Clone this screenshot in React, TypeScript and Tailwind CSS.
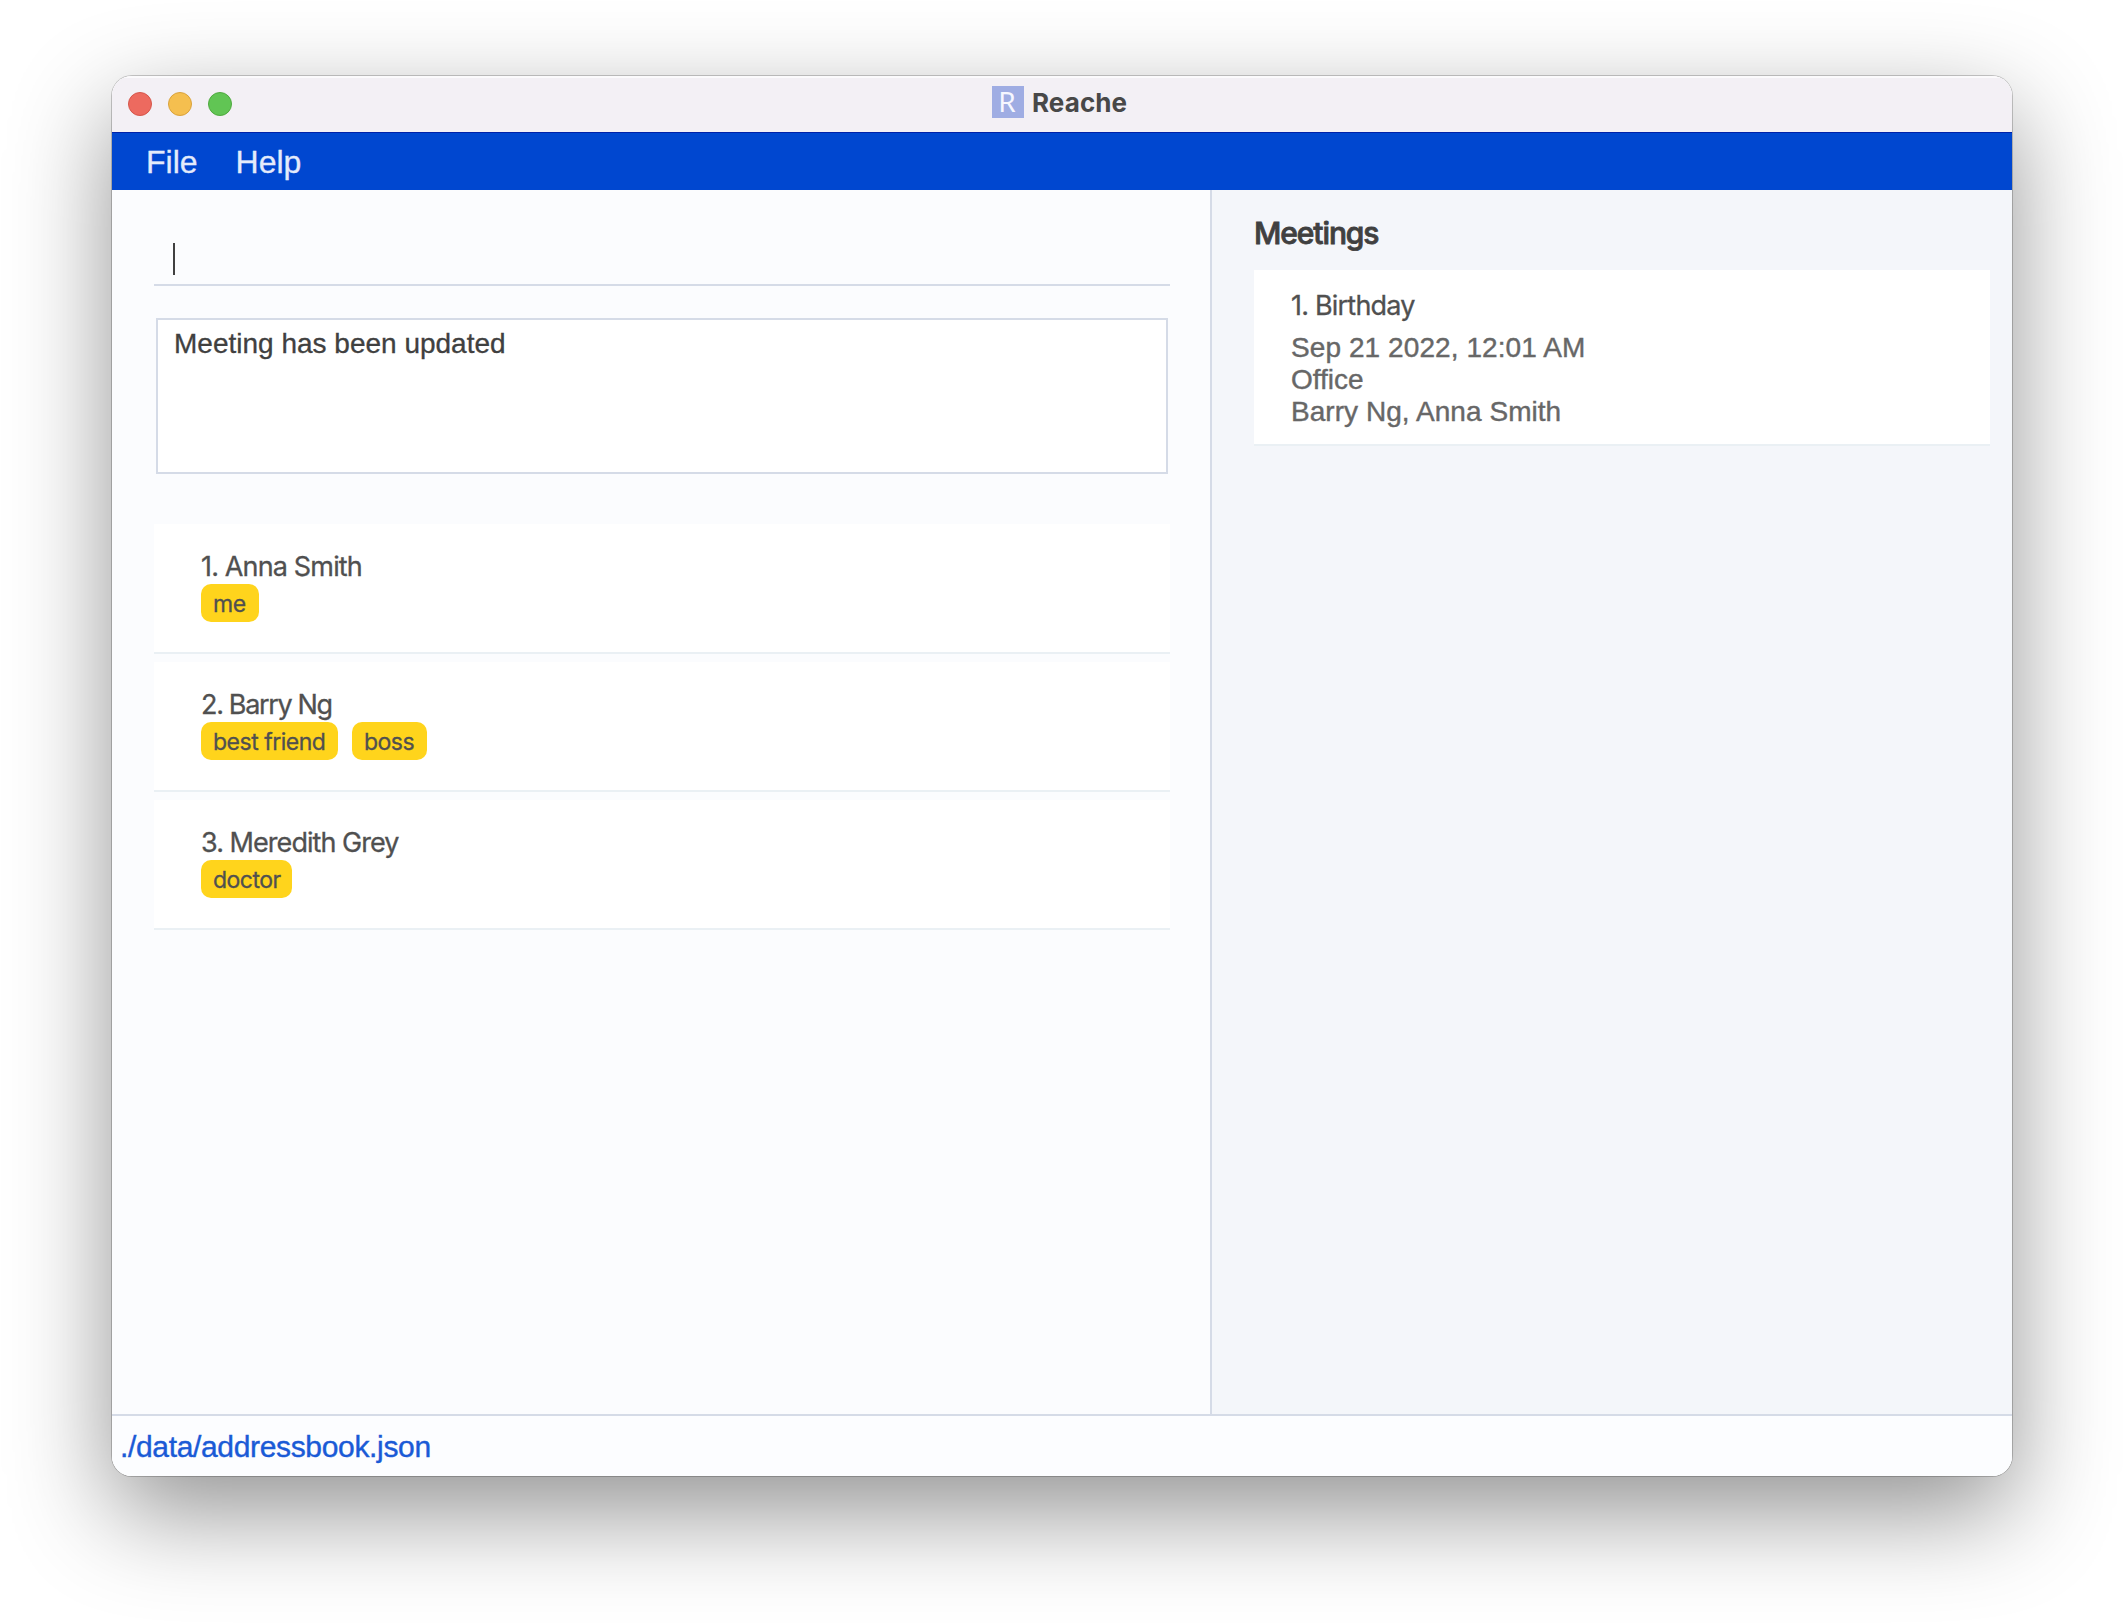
const contacts = [
  { name: "Anna Smith", tags: [{ label: "me", width: "w-[58px]" }], track: "tracking-[-0.85px]" },
  {
    name: "Barry Ng",
    tags: [
      { label: "best friend", width: "w-[137px]" },
      { label: "boss", width: "w-[75px]" },
    ],
    track: "tracking-[-1.35px]",
  },
  { name: "Meredith Grey", tags: [{ label: "doctor", width: "w-[91px]" }], track: "tracking-[-0.95px]" },
];

type Contact = (typeof contacts)[number];

function TitleBar() {
  return (
    <header className="relative flex h-14 shrink-0 items-center bg-[#f3f0f5] shadow-[inset_0_2px_0_#fbfafc]">
      <div className="flex gap-4 pl-4">
        <span className="size-6 rounded-full border border-[#d5564b] bg-[#ed6a5f]" />
        <span className="size-6 rounded-full border border-[#d9a23c] bg-[#f5bf4f]" />
        <span className="size-6 rounded-full border border-[#4fa93f] bg-[#61c554]" />
      </div>
      <div className="absolute top-[10px] left-[880px] flex h-8 items-center gap-[8px]">
        <span className="flex size-8 justify-center bg-[#9fade3] pr-[2px] font-['Noto_Sans'] text-[28px] leading-[31px] text-[#f6f7ff]">
          R
        </span>
        <span className="pt-[2px] font-[Inter] text-[26px] leading-8 font-bold tracking-[0.1px] text-[#484848]">Reache</span>
      </div>
    </header>
  );
}

function MenuBar() {
  return (
    <nav className="flex h-[58px] shrink-0 items-center gap-[38px] border-t border-[#0022a8] bg-[#0047d0] pl-[34px] text-[32px] leading-[58px] text-[#e4ebfb] [-webkit-text-stroke:0.3px_#e4ebfb]">
      <span>File</span>
      <span>Help</span>
    </nav>
  );
}

function ContactCard({ index, name, tags, track }: Contact & { index: number }) {
  return (
    <li className="flex h-[130px] flex-col border-b-2 border-[#eaf0f4] bg-white pt-[26px] pl-[47px] font-[Inter] text-[#505050] [-webkit-text-stroke:0.3px_#505050]">
      <span className={`text-[27px] leading-[34px] ${track}`}>
        {index}. {name}
      </span>
      <div className="flex gap-[14px]">
        {tags.map((tag) => (
          <span
            key={tag.label}
            className={`h-[38px] rounded-[10px] bg-[#ffd41c] pl-3 text-[23px] leading-[40px] tracking-[-0.5px] whitespace-nowrap ${tag.width}`}
          >
            {tag.label}
          </span>
        ))}
      </div>
    </li>
  );
}

function Meetings() {
  return (
    <aside className="flex-1 border-l-2 border-[#d5dbe7] bg-[#f4f6fa] pt-[25px] pr-[22px] pl-[42px]">
      <div className="flex h-[55px] flex-col">
        <h2 className="font-[Inter] text-[30px] leading-[37px] font-medium tracking-[-1.1px] text-[#404040] [-webkit-text-stroke:0.8px_#404040]">
          Meetings
        </h2>
      </div>
      <article className="h-[176px] border-b-2 border-[#eaf0f4] bg-white pt-[18px] pl-[37px]">
        <h3 className="mb-2 font-[Inter] text-[27px] leading-[36px] tracking-[-0.8px] text-[#505050] [-webkit-text-stroke:0.3px_#505050]">
          1. Birthday
        </h3>
        <div className="text-[28px] leading-8 text-[#676767] [-webkit-text-stroke:0.4px_#676767]">
          <p className="tracking-[0.08px]">Sep 21 2022, 12:01 AM</p>
          <p>Office</p>
          <p className="tracking-[0.05px]">Barry Ng, Anna Smith</p>
        </div>
      </article>
    </aside>
  );
}

export default function App() {
  return (
    <div className="h-[1624px] w-[2124px] overflow-hidden bg-white pt-[76px] pl-28 font-['Liberation_Sans',sans-serif]">
      <div className="h-[1400px] w-[1900px] rounded-[20px] shadow-[0_0_0_1px_rgba(0,0,0,0.2),0_36px_100px_rgba(0,0,0,0.43)]">
        <div className="flex h-full flex-col overflow-hidden rounded-[20px] bg-[#fbfcfe]">
          <TitleBar />
          <MenuBar />
          <div className="flex min-h-0 flex-1">
            <main className="w-[1098px] shrink-0 px-[42px] pt-[42px]">
              <div className="h-[54px] w-[1016px] border-b-2 border-[#d5dbe7] pt-[11px] pl-[19px]">
                <div className="h-8 w-[2px] bg-[#404040]" />
              </div>
              <div className="mt-8 ml-[2px] h-[156px] w-[1012px] border-2 border-[#d5dbe7] bg-white pt-[6px] pl-4 text-[28px] leading-[36px] text-[#404040] [-webkit-text-stroke:0.3px_#404040]">
                Meeting has been updated
              </div>
              <ul className="mt-[50px] flex w-[1016px] flex-col gap-2">
                {contacts.map((c, i) => (
                  <ContactCard key={c.name} index={i + 1} {...c} />
                ))}
              </ul>
            </main>
            <Meetings />
          </div>
          <footer className="h-[62px] shrink-0 border-t-2 border-[#d5dbe7] bg-[#fcfdff] pl-2 text-[30px] leading-[62px] tracking-[-0.34px] text-[#1a5ad6] [-webkit-text-stroke:0.4px_#1a5ad6]">
            ./data/addressbook.json
          </footer>
        </div>
      </div>
    </div>
  );
}
